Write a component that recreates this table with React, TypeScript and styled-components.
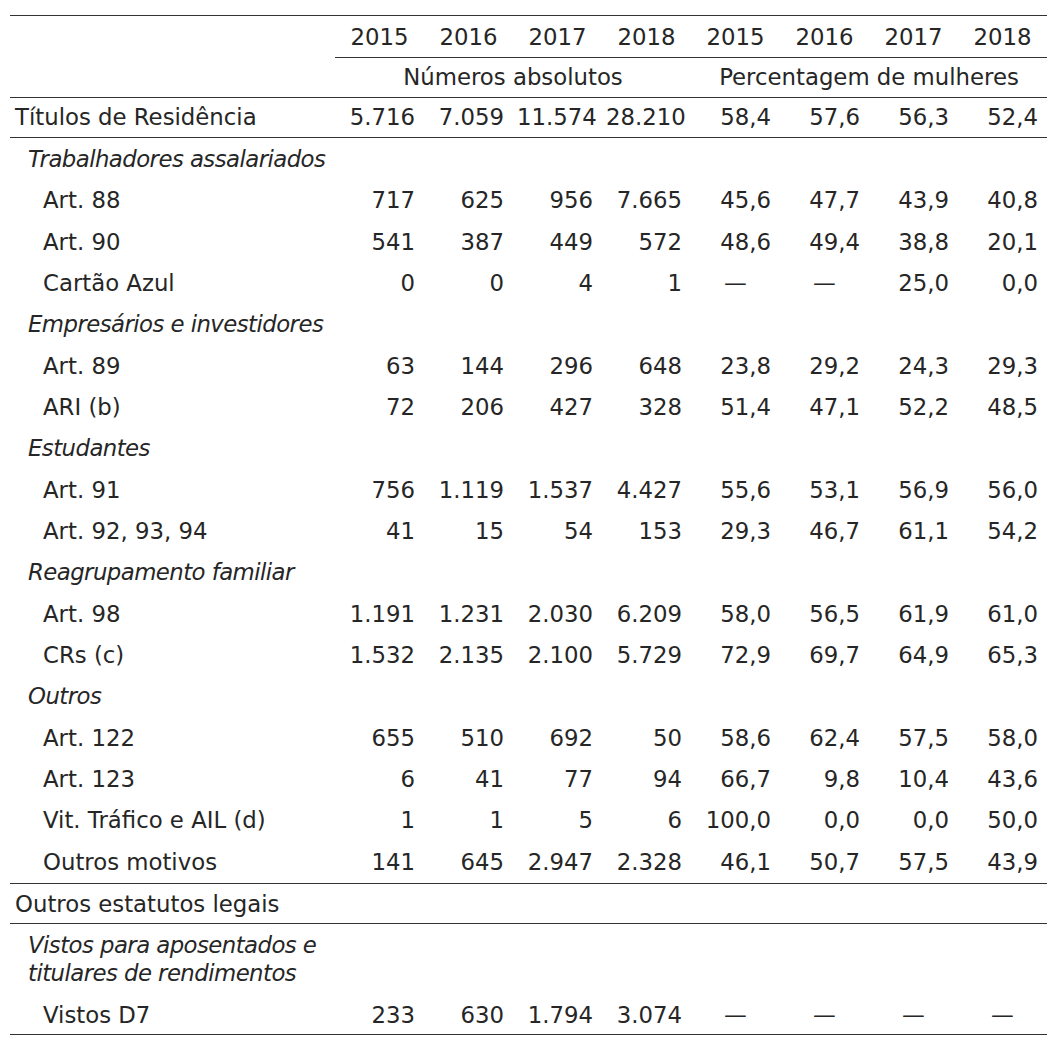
import styled, { createGlobalStyle, css } from 'styled-components';

const GlobalStyle = createGlobalStyle`
  html, body {
    margin: 0;
    background: #ffffff;
  }
`;

type Kind = 'total' | 'group' | 'item';

interface TableRow {
  label: string[];
  kind: Kind;
  values?: string[];
  ruled?: boolean;
  pad?: [number, number];
}

const years = ['2015', '2016', '2017', '2018'];

const rows: TableRow[] = [
  { label: ['Títulos de Residência'], kind: 'total', values: ['5.716', '7.059', '11.574', '28.210', '58,4', '57,6', '56,3', '52,4'], ruled: true, pad: [5.1, 6.1] },
  { label: ['Trabalhadores assalariados'], kind: 'group' },
  { label: ['Art. 88'], kind: 'item', values: ['717', '625', '956', '7.665', '45,6', '47,7', '43,9', '40,8'] },
  { label: ['Art. 90'], kind: 'item', values: ['541', '387', '449', '572', '48,6', '49,4', '38,8', '20,1'] },
  { label: ['Cartão Azul'], kind: 'item', values: ['0', '0', '4', '1', '—', '—', '25,0', '0,0'] },
  { label: ['Empresários e investidores'], kind: 'group' },
  { label: ['Art. 89'], kind: 'item', values: ['63', '144', '296', '648', '23,8', '29,2', '24,3', '29,3'] },
  { label: ['ARI (b)'], kind: 'item', values: ['72', '206', '427', '328', '51,4', '47,1', '52,2', '48,5'] },
  { label: ['Estudantes'], kind: 'group' },
  { label: ['Art. 91'], kind: 'item', values: ['756', '1.119', '1.537', '4.427', '55,6', '53,1', '56,9', '56,0'] },
  { label: ['Art. 92, 93, 94'], kind: 'item', values: ['41', '15', '54', '153', '29,3', '46,7', '61,1', '54,2'] },
  { label: ['Reagrupamento familiar'], kind: 'group' },
  { label: ['Art. 98'], kind: 'item', values: ['1.191', '1.231', '2.030', '6.209', '58,0', '56,5', '61,9', '61,0'] },
  { label: ['CRs (c)'], kind: 'item', values: ['1.532', '2.135', '2.100', '5.729', '72,9', '69,7', '64,9', '65,3'] },
  { label: ['Outros'], kind: 'group' },
  { label: ['Art. 122'], kind: 'item', values: ['655', '510', '692', '50', '58,6', '62,4', '57,5', '58,0'] },
  { label: ['Art. 123'], kind: 'item', values: ['6', '41', '77', '94', '66,7', '9,8', '10,4', '43,6'] },
  { label: ['Vit. Tráfico e AIL (d)'], kind: 'item', values: ['1', '1', '5', '6', '100,0', '0,0', '0,0', '50,0'] },
  { label: ['Outros motivos'], kind: 'item', values: ['141', '645', '2.947', '2.328', '46,1', '50,7', '57,5', '43,9'], ruled: true },
  { label: ['Outros estatutos legais'], kind: 'total', ruled: true, pad: [6, 4.4] },
  { label: ['Vistos para aposentados e', 'titulares de rendimentos'], kind: 'group', pad: [6.9, 6.6] },
  { label: ['Vistos D7'], kind: 'item', values: ['233', '630', '1.794', '3.074', '—', '—', '—', '—'], ruled: true, pad: [6.4, 5.2] },
];

const Page = styled.main`
  padding: 15px 0 0 10px;
`;

const Table = styled.table`
  width: 1037px;
  table-layout: fixed;
  border-collapse: separate;
  border-spacing: 0;
  border-top: 1px solid #333333;
  font-family: 'DejaVu Sans', Verdana, sans-serif;
  font-size: 22.8px;
  line-height: 28.6px;
  color: #262626;
`;

const LabelCol = styled.col`
  width: 325px;
`;

const DataCol = styled.col`
  width: 89px;
`;

const Row = styled.tr<{ $pad?: [number, number]; $ruled?: boolean }>`
  & > th,
  & > td {
    padding-top: ${(p) => (p.$pad ? p.$pad[0] : 6.38)}px;
    padding-bottom: ${(p) => (p.$pad ? p.$pad[1] : 6.38)}px;
    ${(p) =>
      p.$ruled &&
      css`
        border-bottom: 1px solid #333333;
      `}
  }
`;

const HeadCell = styled.th<{ $ruled?: boolean }>`
  padding-left: 0;
  padding-right: 0;
  font-weight: normal;
  text-align: center;
  white-space: nowrap;
  ${(p) =>
    p.$ruled &&
    css`
      border-bottom: 1px solid #333333;
    `}
`;

const LabelCell = styled.td<{ $kind: Kind }>`
  padding-left: ${(p) => (p.$kind === 'total' ? 5 : p.$kind === 'group' ? 18 : 33)}px;
  padding-right: 0;
  font-style: ${(p) => (p.$kind === 'group' ? 'italic' : 'normal')};
  letter-spacing: ${(p) => (p.$kind === 'group' ? '-0.55px' : 'normal')};
  white-space: nowrap;
`;

const ValueCell = styled.td<{ $dash?: boolean }>`
  padding-left: ${(p) => (p.$dash ? 0 : 4)}px;
  padding-right: ${(p) => (p.$dash ? 0 : 9)}px;
  text-align: ${(p) => (p.$dash ? 'center' : 'right')};
  white-space: nowrap;
`;

export default function App() {
  return (
    <Page>
      <GlobalStyle />
      <Table>
        <colgroup>
          <LabelCol />
          {Array.from({ length: 8 }, (_, i) => (
            <DataCol key={i} />
          ))}
        </colgroup>
        <thead>
          <Row $pad={[6.8, 5.6]}>
            <HeadCell />
            {[...years, ...years].map((year, i) => (
              <HeadCell key={i} $ruled>
                {year}
              </HeadCell>
            ))}
          </Row>
          <Row $pad={[4.8, 5.3]} $ruled>
            <HeadCell />
            <HeadCell colSpan={4}>Números absolutos</HeadCell>
            <HeadCell colSpan={4}>Percentagem de mulheres</HeadCell>
          </Row>
        </thead>
        <tbody>
          {rows.map((row) => (
            <Row key={row.label.join(' ')} $pad={row.pad} $ruled={row.ruled}>
              <LabelCell $kind={row.kind} colSpan={row.values ? 1 : 9}>
                {row.label.map((line, i) => (
                  <span key={line}>
                    {i > 0 && <br />}
                    {line}
                  </span>
                ))}
              </LabelCell>
              {row.values?.map((value, i) => (
                <ValueCell key={i} $dash={value === '—'}>
                  {value}
                </ValueCell>
              ))}
            </Row>
          ))}
        </tbody>
      </Table>
    </Page>
  );
}
